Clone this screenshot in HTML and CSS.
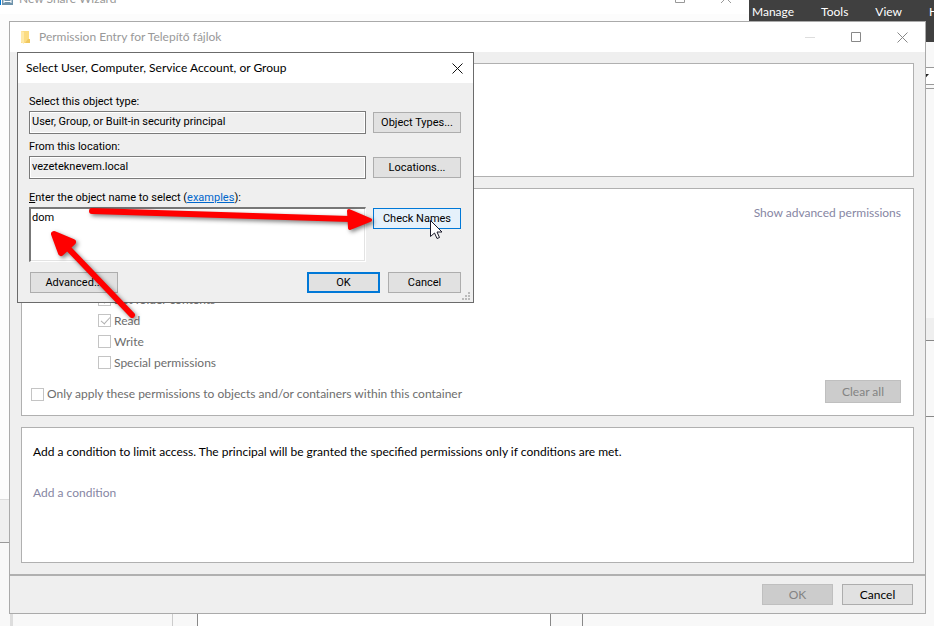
FILE: index.html
```html
<!DOCTYPE html>
<html lang="en">
<head>
    <meta charset="UTF-8">
    <meta name="viewport" content="width=device-width, initial-scale=1.0">
    <title>Permission Entry</title>
    <link rel="stylesheet" href="styles.css">
</head>
<body>
    <!-- Server manager, behind everything -->
    <div class="manager">
        <nav class="menubar">
            <a href="#">Manage</a>
            <a href="#">Tools</a>
            <a href="#">View</a>
            <a href="#">Help</a>
        </nav>
        <div class="toolbar"></div>
        <div class="combo">
            <svg width="9" height="5" viewBox="0 0 9 5"><path d="M0 0h9L4.500 5z" fill="#222"/></svg>
        </div>
        <div class="tile-head"></div>
        <div class="tile-band"></div>
        <div class="tile"></div>
        <div class="columns">
            <div class="col-edge"></div>
            <div class="col-nav"></div>
            <div class="col-gap"></div>
            <div class="col-page"></div>
            <div class="col-side"></div>
        </div>
    </div>

    <div class="wizard">
        <div class="wizard-title">
            <svg width="13" height="14" viewBox="0 0 13 14"><path d="M0 0h1v14H0z" fill="#0078d7"/><path d="M2 0h11v14H2z" fill="#6f93ab"/><path d="M4 9V12M11 9V12M4 10.500H11" stroke="#fff" fill="none"/></svg>
            <span>New Share Wizard</span>
            <svg class="wizard-controls" width="58" height="14" viewBox="0 0 58 14"><path d="M.500 0V11.500H9.500V0M46 12L56 2M56 12L46 2" stroke="#999" fill="none"/></svg>
        </div>
        <div class="wizard-body"></div>
        <div class="wizard-footer"></div>
    </div>

    <!-- Permission entry -->
    <div class="window">
        <header class="titlebar">
            <svg width="10" height="13" viewBox="0 0 10 13"><path d="M0 0h8v12H0z" fill="#fbdc83"/><path d="M0 0l3 1v12l-3-2z" fill="#ffe9a8"/><path d="M7 8h2v4H4z" fill="#f0c75e"/></svg>
            <h1>Permission Entry for Telepítő fájlok</h1>
            <div class="controls">
                <button type="button" aria-label="Minimize"><svg width="11" height="11"><path d="M0 5.500h10" stroke="#ddd"/></svg></button>
                <button type="button" aria-label="Maximize"><svg width="11" height="11"><path d="M.500.500h9v9h-9z" stroke="#888" fill="none"/></svg></button>
                <button type="button" aria-label="Close"><svg width="11" height="11"><path d="M.500.500l10 10M10.500.500l-10 10" stroke="#888"/></svg></button>
            </div>
        </header>
        <main class="content">
            <section class="panel principal"></section>
            <section class="panel permissions">
                <a class="link advanced" href="#">Show advanced permissions</a>
                <div class="checks">
                    <label><input type="checkbox" checked disabled>List folder contents</label>
                    <label><input type="checkbox" checked disabled>Read</label>
                    <label><input type="checkbox" disabled>Write</label>
                    <label><input type="checkbox" disabled>Special permissions</label>
                </div>
                <div class="apply">
                    <label><input type="checkbox" disabled>Only apply these permissions to objects and/or containers within this container</label>
                    <button type="button" class="btn btn-clear" disabled>Clear all</button>
                </div>
            </section>
            <section class="panel condition">
                <p>Add a condition to limit access. The principal will be granted the specified permissions only if conditions are met.</p>
                <a class="link" href="#">Add a condition</a>
            </section>
        </main>
        <footer class="footer">
            <button type="button" class="btn" disabled>OK</button>
            <button type="button" class="btn">Cancel</button>
        </footer>
    </div>

    <!-- Object picker -->
    <form class="dialog">
        <header class="dialog-title">
            <h2>Select User, Computer, Service Account, or Group</h2>
            <button type="button" aria-label="Close"><svg width="11" height="11"><path d="M.500.500l10 10M10.500.500l-10 10" stroke="#111"/></svg></button>
        </header>
        <div class="dialog-body">
            <label for="objectType">Select this object type:</label>
            <div class="row">
                <input type="text" id="objectType" value="User, Group, or Built-in security principal" readonly>
                <button type="button" class="btn">Object Types...</button>
            </div>
            <label for="location">From this location:</label>
            <div class="row">
                <input type="text" id="location" value="vezeteknevem.local" readonly>
                <button type="button" class="btn">Locations...</button>
            </div>
            <label class="names-label" for="names"><u>E</u>nter the object name to select (<a href="#">examples</a>):</label>
            <div class="row row-names">
                <textarea id="names">dom</textarea>
                <button type="button" class="btn btn-hot">Check Names</button>
            </div>
            <div class="actions">
                <button type="button" class="btn">Advanced...</button>
                <button type="submit" class="btn btn-default">OK</button>
                <button type="button" class="btn">Cancel</button>
            </div>
        </div>
        <svg class="grip" width="8" height="8"><path d="M6 0h2v2h-2zM3 3h2v2h-2zM6 3h2v2h-2zM0 6h2v2h-2zM3 6h2v2h-2zM6 6h2v2h-2z" fill="#bbb"/></svg>
    </form>

    <svg class="arrows" width="400" height="340" viewBox="0 0 400 340">
        <g fill="red" stroke="red" stroke-linecap="round" stroke-linejoin="round">
            <path d="M92 211L350 219" stroke-width="6"/>
            <path d="M349 211L370 220L350 228Z" stroke-width="4"/>
            <path d="M132 315L66 246" stroke-width="6"/>
            <path d="M54 234L73 242L61 253Z" stroke-width="6"/>
        </g>
    </svg>
    <svg class="cursor" width="13" height="20" viewBox="0 0 13 20"><path d="M.500.500V16.500L4.500 13L7 18.500L9.500 17.500L7 12H12Z" fill="#fff" stroke="#1a1a2a"/></svg>
</body>
</html>
```

FILE: styles.css
```css
* {
    box-sizing: border-box;
}
body {
    margin: 0;
    height: 100vh;
    overflow: hidden;
    position: relative;
    font-family: Lato, "Open Sans", sans-serif;
    font-size: 12px;
    line-height: 18px;
    color: #000;
}
button, input, textarea {
    font: inherit;
    color: inherit;
    margin: 0;
}
svg {
    display: block;
}
h1, h2, p {
    margin: 0;
    font-size: 12px;
    font-weight: normal;
}

/* Server manager */
.manager {
    height: 100%;
    display: flex;
    flex-direction: column;
    background-color: #f8f8f8;
}
.menubar {
    height: 42px;
    padding: 3px 0 0 752px;
    display: flex;
    gap: 27px;
    background-color: #404040;
}
.menubar a {
    color: #fff;
    text-decoration: none;
}
.toolbar {
    height: 26px;
    border-bottom: 1px solid #999;
}
.combo {
    height: 17px;
    padding: 6px 5px 0;
    display: flex;
    justify-content: flex-end;
    background-color: #fff;
    border-bottom: 1px solid #999;
}
.tile-head {
    height: 230px;
    margin-top: 3px;
    border-top: 1px solid #999;
}
.tile-band {
    height: 23px;
    background-color: #efefef;
    border-bottom: 1px solid #888;
}
.tile {
    height: 76px;
    border-bottom: 1px solid #888;
}
.columns {
    flex: 1;
    display: flex;
}
.col-edge {
    width: 13px;
    border-right: 3px solid #ddd;
}
.col-nav {
    width: 160px;
    border-right: 1px solid #ccc;
}
.col-gap {
    width: 24px;
}
.col-page {
    width: 354px;
    background-color: #fff;
    border-left: 1px solid #888;
    border-right: 1px solid #888;
}
.col-side {
    width: 32px;
    border-right: 1px solid #888;
}

/* Share wizard */
.wizard {
    position: absolute;
    top: 0;
    left: 0;
    width: 749px;
    background-color: #fcfcfc;
    border-bottom: 1px solid #999;
}
.wizard-title {
    height: 14px;
    display: flex;
    align-items: flex-start;
    gap: 6px;
    background-color: #fff;
    color: #999;
}
.wizard-title span {
    margin-top: -10px;
}
.wizard-title svg {
    margin-top: -9px;
}
.wizard-controls {
    margin-left: auto;
    margin-right: 16px;
}
.wizard-body {
    height: 485px;
}
.wizard-footer {
    height: 43px;
    background-color: #efefef;
    border-top: 1px solid #ddd;
}

/* Permission entry */
.window {
    position: absolute;
    top: 21px;
    left: 9px;
    right: 8px;
    border: 1px solid #aaa;
    background-color: #efefef;
}
.titlebar {
    height: 30px;
    padding: 0 17px 0 11px;
    display: flex;
    align-items: center;
    gap: 8px;
    background-color: #fff;
}
.titlebar h1 {
    flex: 1;
    color: #999;
}
.controls {
    display: flex;
    gap: 35px;
}
.controls button, .dialog-title button {
    padding: 0;
    border: none;
    background: none;
}
.content {
    padding: 11px;
    display: flex;
    flex-direction: column;
    gap: 11px;
}
.panel {
    background-color: #fff;
    border: 1px solid #b0b0b0;
}
.principal {
    height: 114px;
}
.permissions {
    padding: 15px 12px 12px 9px;
    display: flex;
    flex-direction: column;
    color: #6d6d6d;
}
.link {
    color: #8686a3;
    text-decoration: none;
}
.advanced {
    align-self: flex-end;
}
.checks {
    margin: 67px 0 7px;
    padding-left: 67px;
    display: flex;
    flex-direction: column;
}
.permissions label {
    display: flex;
    align-items: center;
    gap: 3px;
}
.checks label {
    height: 21px;
}
.permissions input {
    appearance: none;
    width: 13px;
    height: 13px;
    border: 1px solid #c4c4c4;
    background-color: #fff;
    position: relative;
}
.permissions input:checked::after {
    content: "";
    position: absolute;
    left: 4px;
    top: 0;
    width: 4px;
    height: 8px;
    border: solid #b0b0b0;
    border-width: 0 1px 1px 0;
    transform: rotate(42deg);
}
.apply {
    display: flex;
    align-items: flex-end;
    justify-content: space-between;
}
.condition {
    height: 136px;
    padding: 15px 11px;
    display: flex;
    flex-direction: column;
    align-items: flex-start;
    gap: 23px;
}
.btn {
    width: 71px;
    height: 21px;
    padding: 0;
    line-height: 18px;
    border: 1px solid #adadad;
    background-color: #e1e1e1;
}
.btn:disabled {
    color: #838383;
    border-color: #bfbfbf;
    background-color: #ccc;
}
.btn-clear {
    width: 76px;
    height: 23px;
}
.footer {
    padding: 8px 12px;
    display: flex;
    justify-content: flex-end;
    gap: 9px;
    border-top: 2px solid #b0b0b0;
}

/* Object picker */
.dialog {
    position: absolute;
    top: 52px;
    left: 17px;
    width: 457px;
    border: 1px solid #6b6b6b;
    background-color: #efefef;
}
.dialog-title {
    height: 30px;
    padding: 0 10px 0 8px;
    display: flex;
    align-items: center;
    justify-content: space-between;
    background-color: #fff;
}
.dialog-body {
    padding: 12px 12px 9px 11px;
    display: flex;
    flex-direction: column;
    font-family: Roboto, "Liberation Sans", sans-serif;
    font-size: 11px;
    line-height: 14px;
}
.row {
    margin: 2px 0 6px;
    display: grid;
    grid-template-columns: 1fr 88px;
    align-items: center;
    gap: 7px;
}
.row input {
    width: 100%;
    height: 23px;
    padding: 0 2px 3px;
    border: 1px solid #7a7a7a;
    outline: 1px solid #fff;
    outline-offset: -2px;
    background-color: #efefef;
}
.names-label {
    margin-top: 6px;
}
.names-label a {
    color: #0066cc;
}
.row-names {
    margin-bottom: 10px;
    align-items: start;
}
.row textarea {
    width: 100%;
    height: 55px;
    padding: 2px 1px;
    display: block;
    resize: none;
    border: 1px solid #fff;
    border-top: 2px solid #777;
    border-left: 2px solid #777;
    background-color: #fff;
    box-shadow: inset -1px -1px #e3e3e3;
}
.dialog .btn {
    width: auto;
    line-height: 16px;
}
.dialog .btn-hot {
    margin-top: 1px;
    border-color: #0078d7;
    background-color: #e5f1fb;
}
.actions {
    padding-left: 1px;
    display: grid;
    grid-template-columns: 88px 1fr 73px 73px;
    column-gap: 8px;
}
.dialog .btn-default {
    grid-column: 3;
    border: 2px solid #0078d7;
    line-height: 14px;
}
.grip {
    position: absolute;
    right: 3px;
    bottom: 2px;
}

/* Annotations */
.arrows {
    position: absolute;
    top: 0;
    left: 0;
    pointer-events: none;
    filter: drop-shadow(2px 2px 2px rgba(0, 0, 0, 0.5));
}
.cursor {
    position: absolute;
    top: 220px;
    left: 430px;
    pointer-events: none;
}
```
